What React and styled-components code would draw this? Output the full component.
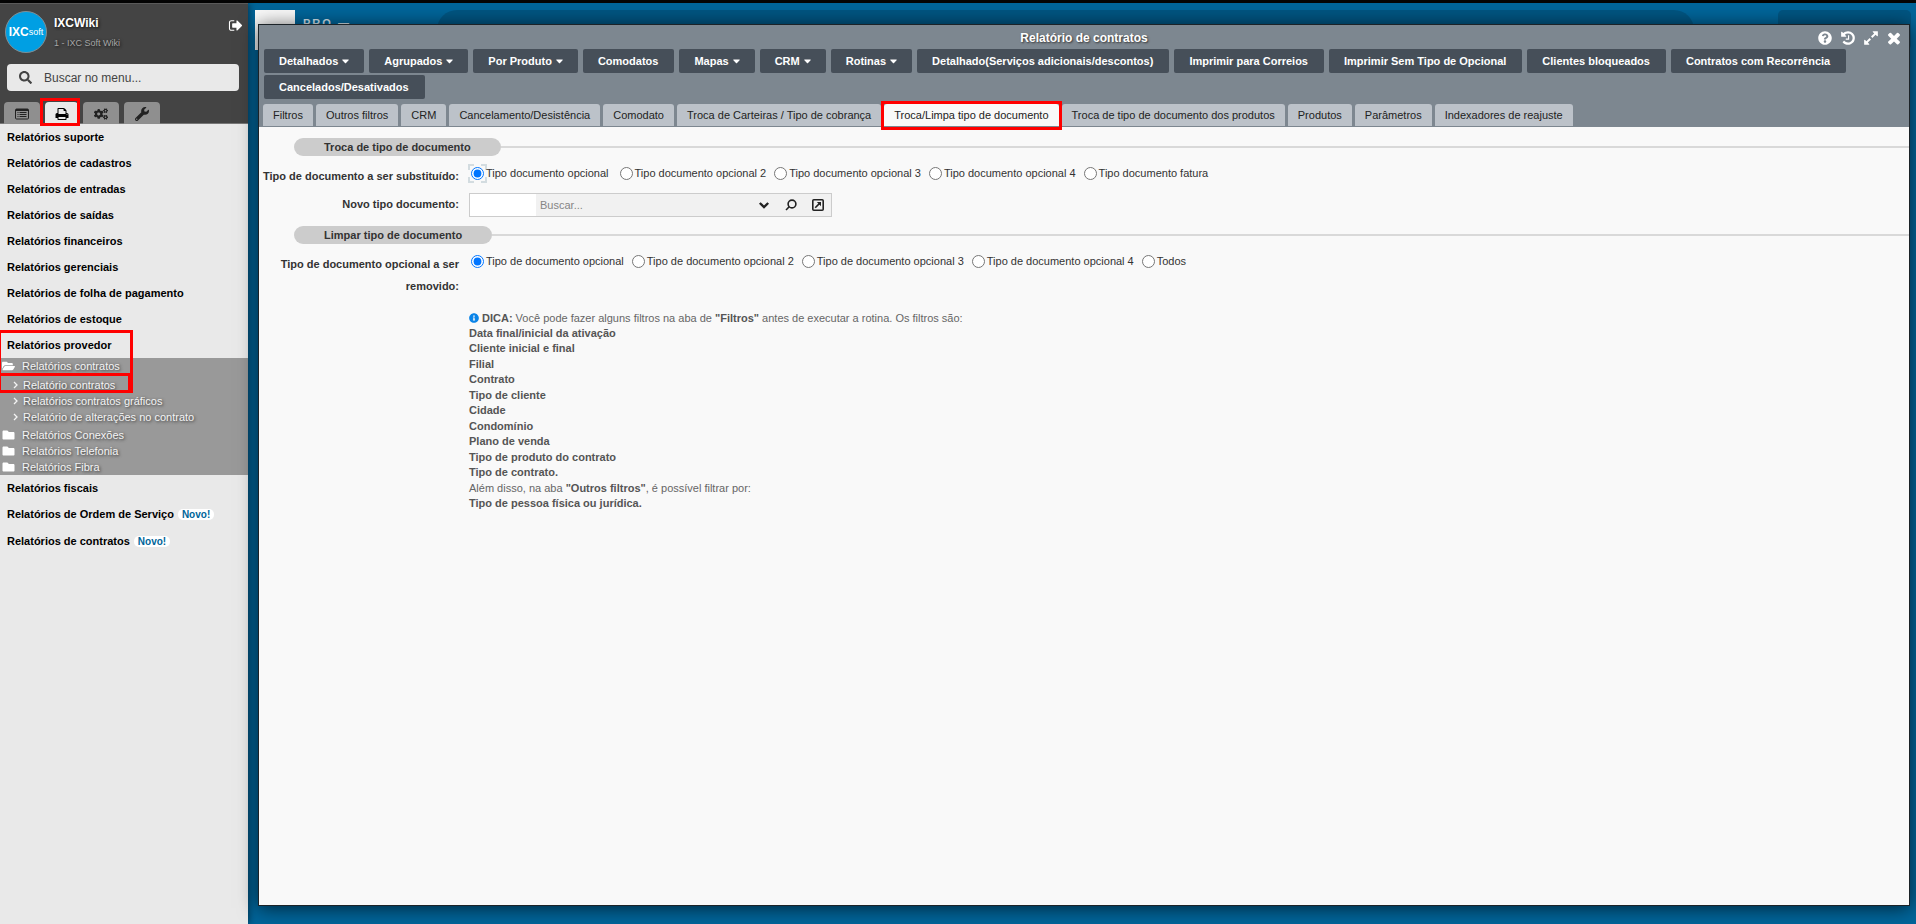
/* eslint-disable react/prop-types */
import { useState } from 'react';
import styled, { createGlobalStyle } from 'styled-components';
import {
    FaCaretDown, FaCogs, FaFolder, FaFolderOpen,
    FaInfoCircle, FaQuestionCircle, FaSearch, FaWrench
} from 'react-icons/fa';

const paths = {
    print: 'M384 1536h896v-256h-896v256zM384 896h896v-384h-160q-40 0-68-28t-28-68v-160h-640v640zM1536 960q0-26-19-45t-45-19-45 19-19 45 19 45 45 19 45-19 19-45zM1664 960v416q0 13-9.5 22.5t-22.5 9.5h-224v160q0 40-28 68t-68 28h-960q-40 0-68-28t-28-68v-160h-224q-13 0-22.5-9.5t-9.5-22.5v-416q0-79 56.5-135.5t135.5-56.5h64v-544q0-40 28-68t68-28h672q40 0 88 20t76 48l152 152q28 28 48 76t20 88v256h64q79 0 135.5 56.5t56.5 135.5z',
    signOut: 'M640 1440q0 4 1 20t.5 26.5-3 23.5-10 19.5-20.5 6.5h-320q-119 0-203.5-84.5t-84.5-203.5v-704q0-119 84.5-203.5t203.5-84.5h320q13 0 22.5 9.5t9.5 22.5q0 4 1 20t.5 26.5-3 23.5-10 19.5-20.5 6.5h-320q-66 0-113 47t-47 113v704q0 66 47 113t113 47h312l11.5 1 11.5 3 8 5.5 7 9 2 13.5zM1568 896q0 26-19 45l-544 544q-19 19-45 19t-45-19-19-45v-288h-448q-26 0-45-19t-19-45v-384q0-26 19-45t45-19h448v-288q0-26 19-45t45-19 45 19l544 544q19 19 19 45z',
    close: 'M1490 1322q0 40-28 68l-136 136q-28 28-68 28t-68-28l-294-294-294 294q-28 28-68 28t-68-28l-136-136q-28-28-28-68t28-68l294-294-294-294q-28-28-28-68t28-68l136-136q28-28 68-28t68 28l294 294 294-294q28-28 68-28t68 28l136 136q28 28 28 68t-28 68l-294 294 294 294q28 28 28 68z',
    history: 'M1664 896q0 156-61 298t-164 245-245 164-298 61q-172 0-327-72.5t-264-204.5q-7-10-6.5-22.5t8.5-20.5l137-138q10-9 25-9 16 2 23 12 73 95 179 147t225 52q104 0 198.5-40.5t163.5-109.5 109.5-163.5 40.5-198.5-40.5-198.5-109.5-163.5-163.5-109.5-198.5-40.5q-98 0-188 35.5t-160 101.5l137 138q31 30 14 69-17 40-59 40h-448q-26 0-45-19t-19-45v-448q0-42 40-59 39-17 69 14l130 129q107-101 244.5-156.5t284.5-55.5q156 0 298 61t245 164 164 245 61 298zM1024 608v448q0 14-9 23t-23 9h-320q-14 0-23-9t-9-23v-64q0-14 9-23t23-9h224v-352q0-14 9-23t23-9h64q14 0 23 9t9 23z',
    expand: 'M883 1056q0 13-10 23l-332 332 144 144q19 19 19 45t-19 45-45 19h-448q-26 0-45-19t-19-45v-448q0-26 19-45t45-19 45 19l144 144 332-332q10-10 23-10t23 10l114 114q10 10 10 23zM1664 192v448q0 26-19 45t-45 19-45-19l-144-144-332 332q-10 10-23 10t-23-10l-114-114q-10-10-10-23t10-23l332-332-144-144q-19-19-19-45t19-45 45-19h448q26 0 45 19t19 45z'
};

function Glyph({ name, size, width = 1792 }) {
    return (
        <svg width={size} height={size} viewBox={`0 0 ${width} 1792`} fill="currentColor" aria-hidden="true">
            <path d={paths[name]} />
        </svg>
    );
}

function ListIcon() {
    return (
        <svg viewBox="0 0 14 12" fill="none" stroke="currentColor" aria-hidden="true">
            <rect x="0.5" y="1" width="13" height="10" rx="1" />
            <path d="M1 2h12" strokeWidth="2" />
            <path d="M2.5 4.5h1M4.5 4.5h7M2.5 6.5h1M4.5 6.5h7M2.5 8.5h1M4.5 8.5h7" />
        </svg>
    );
}

function Chevron() {
    return (
        <svg viewBox="0 0 10 12" fill="none" stroke="currentColor" strokeWidth="1.3" aria-hidden="true">
            <path d="M3 3l3 3-3 3" />
        </svg>
    );
}

const actions = [
    { name: 'Detalhados', menu: true },
    { name: 'Agrupados', menu: true },
    { name: 'Por Produto', menu: true },
    { name: 'Comodatos' },
    { name: 'Mapas', menu: true },
    { name: 'CRM', menu: true },
    { name: 'Rotinas', menu: true },
    { name: 'Detalhado(Serviços adicionais/descontos)' },
    { name: 'Imprimir para Correios' },
    { name: 'Imprimir Sem Tipo de Opcional' },
    { name: 'Clientes bloqueados' },
    { name: 'Contratos com Recorrência' },
    { name: 'Cancelados/Desativados' }
];

const tabs = [
    'Filtros', 'Outros filtros', 'CRM', 'Cancelamento/Desistência', 'Comodato',
    'Troca de Carteiras / Tipo de cobrança', 'Troca/Limpa tipo de documento',
    'Troca de tipo de documento dos produtos', 'Produtos', 'Parâmetros', 'Indexadores de reajuste'
];

const reportsBefore = [
    'Relatórios suporte', 'Relatórios de cadastros', 'Relatórios de entradas', 'Relatórios de saídas',
    'Relatórios financeiros', 'Relatórios gerenciais', 'Relatórios de folha de pagamento', 'Relatórios de estoque'
];

const replaceOptions = [
    'Tipo documento opcional', 'Tipo documento opcional 2', 'Tipo documento opcional 3',
    'Tipo documento opcional 4', 'Tipo documento fatura'
];

const removeOptions = [
    'Tipo de documento opcional', 'Tipo de documento opcional 2', 'Tipo de documento opcional 3',
    'Tipo de documento opcional 4', 'Todos'
];

const filters = [
    'Data final/inicial da ativação', 'Cliente inicial e final', 'Filial', 'Contrato', 'Tipo de cliente',
    'Cidade', 'Condomínio', 'Plano de venda', 'Tipo de produto do contrato', 'Tipo de contrato.'
];

function Sidebar() {
    return (
        <Aside>
            <SideHeader>
                <User>
                    <Logo><b>IXC</b>soft</Logo>
                    <UserText>
                        <strong>IXCWiki</strong>
                        <span>1 - IXC Soft Wiki</span>
                    </UserText>
                    <IconButton aria-label="Sair"><Glyph name="signOut" size={15} width={1568} /></IconButton>
                </User>
                <Search>
                    <FaSearch />
                    <input type="text" placeholder="Buscar no menu..." aria-label="Buscar no menu" />
                </Search>
                <SideTabs>
                    <SideTab aria-label="Cadastros"><ListIcon /></SideTab>
                    <SideTab aria-label="Relatórios" $active><Glyph name="print" size={14} width={1664} /><TabMark /></SideTab>
                    <SideTab aria-label="Configurações"><FaCogs /></SideTab>
                    <SideTab aria-label="Ferramentas"><FaWrench /></SideTab>
                </SideTabs>
            </SideHeader>
            <nav>
                <Menu>
                    {reportsBefore.map(name => <li key={name}><MenuLink href="#">{name}</MenuLink></li>)}
                    <OpenItem>
                        <MenuLink href="#">Relatórios provedor</MenuLink>
                        <GroupMark />
                        <Submenu>
                            <li>
                                <FolderLink href="#"><FaFolderOpen />Relatórios contratos</FolderLink>
                                <Leaves>
                                    <li><LeafLink href="#"><Chevron />Relatório contratos</LeafLink><LeafMark /></li>
                                    <li><LeafLink href="#"><Chevron />Relatórios contratos gráficos</LeafLink></li>
                                    <li><LeafLink href="#"><Chevron />Relatório de alterações no contrato</LeafLink></li>
                                </Leaves>
                            </li>
                            <li><FolderLink href="#"><FaFolder />Relatórios Conexões</FolderLink></li>
                            <li><FolderLink href="#"><FaFolder />Relatórios Telefonia</FolderLink></li>
                            <li><FolderLink href="#"><FaFolder />Relatórios Fibra</FolderLink></li>
                        </Submenu>
                    </OpenItem>
                    <li><MenuLink href="#">Relatórios fiscais</MenuLink></li>
                    <li><MenuLink href="#">Relatórios de Ordem de Serviço<New>Novo!</New></MenuLink></li>
                    <li><MenuLink href="#" $tall>Relatórios de contratos<New>Novo!</New></MenuLink></li>
                </Menu>
            </nav>
        </Aside>
    );
}

function RadioGroup({ name, options, labelId, ring }) {
    const [selected, setSelected] = useState(options[0]);

    return (
        <Radios role="radiogroup" aria-labelledby={labelId}>
            {options.map((option, i) => (
                <Radio key={option} $ring={ring && i === 0}>
                    <input type="radio" name={name} checked={selected === option} onChange={() => setSelected(option)} />
                    {option}
                </Radio>
            ))}
        </Radios>
    );
}

function Report() {
    const [tab, setTab] = useState('Troca/Limpa tipo de documento');

    return (
        <Window>
            <WindowHeader>
                <TitleBar>
                    <h1>Relatório de contratos</h1>
                    <Controls>
                        <IconButton aria-label="Ajuda"><FaQuestionCircle size={14} /></IconButton>
                        <IconButton aria-label="Histórico"><Glyph name="history" size={16} /></IconButton>
                        <IconButton aria-label="Expandir"><Glyph name="expand" size={16} /></IconButton>
                        <IconButton aria-label="Fechar"><Glyph name="close" size={18} /></IconButton>
                    </Controls>
                </TitleBar>
                <Toolbar>
                    {actions.map(({ name, menu }) => (
                        <Action key={name} $menu={menu}>{name}{menu && <FaCaretDown />}</Action>
                    ))}
                </Toolbar>
                <Tabs role="tablist">
                    {tabs.map(name => (
                        <Tab key={name} role="tab" aria-selected={name === tab} $active={name === tab} onClick={() => setTab(name)}>
                            {name}
                        </Tab>
                    ))}
                </Tabs>
            </WindowHeader>

            <Content>
                <Divider><h2>Troca de tipo de documento</h2></Divider>
                <Fields>
                    <FieldLabel as="span" id="substituido">Tipo de documento a ser substituído:</FieldLabel>
                    <RadioGroup name="substituido" labelId="substituido" options={replaceOptions} ring />
                    <FieldLabel htmlFor="novo">Novo tipo documento:</FieldLabel>
                    <Lookup>
                        <input id="novo" type="text" />
                        <input type="text" placeholder="Buscar..." aria-label="Buscar tipo de documento" />
                        <button aria-label="Abrir lista">
                            <LineIcon width="12" height="12" viewBox="0 0 12 12"><path d="M1.8 4 6 8l4.2-4" strokeWidth="2.4" /></LineIcon>
                        </button>
                        <button aria-label="Pesquisar">
                            <LineIcon width="12" height="12" viewBox="0 0 12 12"><circle cx="7" cy="5" r="3.9" /><path d="M4.2 7.8 1 11" /></LineIcon>
                        </button>
                        <button aria-label="Abrir cadastro">
                            <LineIcon width="12" height="12" viewBox="0 0 12 12">
                                <rect x="0.8" y="0.8" width="10.4" height="10.4" rx="1" />
                                <path d="M3.2 8.8 7.6 4.4" />
                                <path d="M4.8 3h4.2v4.2z" fill="#222222" stroke="none" />
                            </LineIcon>
                        </button>
                    </Lookup>
                </Fields>

                <Divider><h2>Limpar tipo de documento</h2></Divider>
                <Fields>
                    <FieldLabel as="span" id="removido">Tipo de documento opcional a ser removido:</FieldLabel>
                    <RadioGroup name="removido" labelId="removido" options={removeOptions} />
                </Fields>

                <Tip>
                    <p>
                        <FaInfoCircle /><strong>DICA:</strong> Você pode fazer alguns filtros na aba de <strong>&quot;Filtros&quot;</strong> antes de executar a rotina. Os filtros são:
                    </p>
                    <ul>
                        {filters.map(name => <li key={name}>{name}</li>)}
                    </ul>
                    <p>Além disso, na aba <strong>&quot;Outros filtros&quot;</strong>, é possível filtrar por:</p>
                    <ul>
                        <li>Tipo de pessoa física ou jurídica.</li>
                    </ul>
                </Tip>
            </Content>
        </Window>
    );
}

export default function App() {
    return (
        <Page>
            <GlobalStyle />
            <Sidebar />
            <Desktop>
                <Backdrop>
                    <Tile />
                    <Brand>PRO —</Brand>
                    <Bar />
                    <SidePanel />
                </Backdrop>
                <Report />
            </Desktop>
        </Page>
    );
}

const GlobalStyle = createGlobalStyle`
    * {
        box-sizing: border-box;
    }
    body {
        margin: 0;
        font-family: "Liberation Sans", Arial, sans-serif;
        font-size: 11px;
    }
    h1, h2, p, ul {
        margin: 0;
        padding: 0;
        font-size: 11px;
    }
    ul {
        list-style: none;
    }
    a {
        color: inherit;
        text-decoration: none;
    }
    button, input {
        font-family: inherit;
        font-size: 11px;
    }
`;

const Page = styled.div`
    display: flex;
    min-height: 100vh;
    background-color: #00659a;
    border-top: 3px solid #050505;
`;

const Aside = styled.aside`
    flex: 0 0 248px;
    background-color: #e9e9e9;
    box-shadow: 0 0 8px rgba(0, 0, 0, 0.6);
`;

const SideHeader = styled.header`
    height: 121px;
    padding-top: 7px;
    background-color: #444444;
    border-top: 1px solid #5a5a5a;
    border-bottom: 1px solid #777777;
`;

const User = styled.div`
    display: flex;
    align-items: flex-start;
    gap: 7px;
    height: 53px;
    padding: 0 5px;
`;

const Logo = styled.div`
    display: flex;
    align-items: center;
    justify-content: center;
    width: 42px;
    height: 42px;
    border: 1px solid #7f8f96;
    border-radius: 50%;
    background-color: #009fe3;
    color: #ffffff;
    font-size: 9px;
    line-height: 12px;
    b{
        font-size: 12px;
    }
`;

const UserText = styled.div`
    display: flex;
    flex: 1;
    flex-direction: column;
    gap: 8px;
    padding-top: 5px;
    text-shadow: 1px 1px 3px #111111;
    strong{
        color: #ffffff;
        font-size: 12px;
        line-height: 14px;
    }
    span{
        color: #a6a6a6;
        font-size: 9px;
        line-height: 10px;
    }
`;

const IconButton = styled.button`
    display: flex;
    align-items: center;
    justify-content: center;
    width: 16px;
    height: 28px;
    padding: 0;
    border: 0;
    background: none;
    color: #ffffff;
    cursor: pointer;
    svg{
        flex-shrink: 0;
    }
`;

const Search = styled.label`
    display: flex;
    align-items: center;
    gap: 12px;
    height: 27px;
    margin: 0 9px 0 7px;
    padding-left: 12px;
    border-radius: 4px;
    background-color: #e9e9e9;
    color: #444444;
    svg{
        width: 13px;
        height: 13px;
    }
    input{
        flex: 1;
        min-width: 0;
        padding: 0;
        border: 0;
        outline: 0;
        background: none;
        font-size: 12px;
    }
    input::placeholder{
        color: #444444;
    }
`;

const SideTabs = styled.div`
    display: flex;
    gap: 5px;
    padding: 11px 4px 0;
`;

const SideTab = styled.button`
    position: relative;
    display: flex;
    align-items: center;
    justify-content: center;
    width: ${props => props.$active ? '33px' : '36px'};
    height: 22px;
    padding: 2px 0 0;
    border: 0;
    border-radius: 4px 4px 0 0;
    background-color: ${props => props.$active ? '#e9e9e9' : '#8f8f8f'};
    color: ${props => props.$active ? '#000000' : '#222222'};
    cursor: pointer;
    svg{
        width: 14px;
        height: 14px;
    }
`;

const Mark = styled.span`
    position: absolute;
    border: 3px solid #ff0000;
    pointer-events: none;
`;

const TabMark = styled(Mark)`
    inset: -4px -2px -2px -5px;
    z-index: 1;
`;

const Menu = styled.ul`
    color: #000000;
`;

const MenuLink = styled.a`
    display: flex;
    align-items: center;
    gap: 4px;
    height: ${props => props.$tall ? '28px' : '26px'};
    padding-left: 7px;
    font-weight: 700;
`;

const New = styled.span`
    padding: 0 4px;
    border-radius: 5px;
    background-color: #ffffff;
    color: #00659a;
    font-size: 10px;
    line-height: 11px;
`;

const OpenItem = styled.li`
    position: relative;
`;

const GroupMark = styled(Mark)`
    top: -2px;
    left: -2px;
    width: 135px;
    height: 63px;
`;

const Submenu = styled.ul`
    background-color: #999999;
    color: #f4f4f4;
    text-shadow: 1px 1px 3px #333333;
`;

const FolderLink = styled.a`
    display: flex;
    align-items: center;
    gap: 7px;
    height: 16px;
    padding-left: 2px;
    svg{
        width: 13px;
        height: 12px;
        color: #ffffff;
    }
`;

const Leaves = styled.ul`
    padding: 3px 0 2px;
    li{
        position: relative;
    }
`;

const LeafLink = styled.a`
    display: flex;
    align-items: center;
    gap: 2px;
    height: 16px;
    padding-left: 11px;
    svg{
        width: 10px;
        height: 12px;
    }
`;

const LeafMark = styled(Mark)`
    top: -4px;
    left: -2px;
    width: 133px;
    height: 20px;
`;

const Desktop = styled.main`
    position: relative;
    flex: 1;
    min-width: 0;
`;

const Backdrop = styled.div`
    display: flex;
    align-items: flex-start;
    padding: 7px 5px 0 7px;
`;

const Tile = styled.div`
    width: 40px;
    height: 40px;
    background-color: #f9f9f9;
`;

const Brand = styled.span`
    flex: 0 0 142px;
    padding: 7px 0 0 8px;
    color: #d4e4ed;
    font-weight: 700;
    letter-spacing: 2px;
    line-height: 12px;
`;

const Bar = styled.div`
    flex: 1;
    height: 40px;
    margin-right: 84px;
    border-radius: 20px;
    background-color: #005582;
`;

const SidePanel = styled.div`
    width: 133px;
    height: 40px;
    border-radius: 5px;
    background-color: #005582;
`;

const Window = styled.section`
    position: absolute;
    inset: 21px 6px 18px 10px;
    display: flex;
    flex-direction: column;
    border: 1px solid #1c2328;
    background-color: #f9f9f9;
    box-shadow: 0 2px 18px rgba(0, 0, 0, 0.65);
`;

const WindowHeader = styled.header`
    border-bottom: 1px solid #7d8790;
    background-color: #7d8790;
`;

const TitleBar = styled.div`
    display: flex;
    align-items: center;
    justify-content: center;
    position: relative;
    height: 24px;
    padding-top: 2px;
    h1{
        color: #ffffff;
        font-size: 12px;
        text-shadow: 1px 1px 2px #333333;
    }
`;

const Controls = styled.div`
    position: absolute;
    top: -1px;
    right: 7px;
    display: flex;
    gap: 7px;
`;

const Toolbar = styled.div`
    display: flex;
    flex-wrap: wrap;
    gap: 2px 5px;
    padding: 0 5px;
`;

const Action = styled.button`
    display: flex;
    align-items: center;
    gap: 4px;
    height: 24px;
    padding: ${props => props.$menu ? '0 15px' : '0 16px 0 15px'};
    border: 0;
    border-radius: 2px;
    background-color: #464f59;
    color: #ffffff;
    font-weight: 700;
    cursor: pointer;
    svg{
        width: 7px;
        height: 12px;
    }
`;

const Tabs = styled.div`
    display: flex;
    gap: 3px;
    padding: 5px 4px 0;
`;

const Tab = styled.button`
    position: relative;
    height: 22px;
    padding: 0 10px;
    border: 0;
    border-radius: 3px 3px 0 0;
    background-color: ${props => props.$active ? '#f9f9f9' : '#bcc2c9'};
    color: #222222;
    cursor: pointer;
    &::after{
        content: '';
        display: ${props => props.$active ? 'block' : 'none'};
        position: absolute;
        inset: -3px -3px -4px;
        border: 3px solid #ff0000;
    }
`;

const Content = styled.div`
    padding-top: 11px;
    color: #333333;
`;

const Divider = styled.div`
    display: flex;
    align-items: center;
    padding-left: 35px;
    h2{
        padding: 0 30px;
        border-radius: 9px;
        background-color: #cccccc;
        line-height: 18px;
    }
    &::after{
        content: '';
        flex: 1;
        height: 2px;
        background-color: #d9d9d9;
    }
`;

const Fields = styled.div`
    display: grid;
    grid-template-columns: 200px 1fr;
    gap: 6px 10px;
    padding: 9px 0;
`;

const FieldLabel = styled.label`
    font-weight: 700;
    line-height: 22px;
    text-align: right;
`;

const Radios = styled.div`
    display: flex;
    flex-wrap: wrap;
    gap: 8px;
    height: 16px;
    padding-left: 2px;
`;

const Radio = styled.label`
    display: flex;
    align-items: center;
    gap: 2px;
    margin-right: ${props => props.$ring ? '3px' : '0'};
    input{
        width: 13px;
        height: 13px;
        margin: 0;
        outline: ${props => props.$ring ? '2px dashed #d3dce0' : '0'};
        outline-offset: 1px;
    }
`;

const Lookup = styled.div`
    display: flex;
    width: 363px;
    height: 24px;
    border: 1px solid #cccccc;
    background-color: #f1f1f1;
    input{
        flex: 1;
        min-width: 0;
        padding: 0 4px;
        border: 0;
        outline: 0;
        background: none;
    }
    input:first-child{
        flex: 0 0 66px;
        background-color: #ffffff;
    }
    input::placeholder{
        color: #858585;
    }
    button{
        display: flex;
        align-items: center;
        justify-content: center;
        width: 27px;
        padding: 0;
        border: 0;
        background: none;
        cursor: pointer;
    }
`;

const LineIcon = styled.svg`
    fill: none;
    stroke: #222222;
    stroke-width: 1.6;
`;

const Tip = styled.div`
    margin: 5px 0 0 210px;
    color: #555555;
    line-height: 15px;
    p{
        color: #666666;
    }
    strong, li{
        color: #555555;
        font-weight: 700;
    }
    li:nth-child(even){
        margin-bottom: 1px;
    }
    svg{
        width: 10px;
        height: 10px;
        margin-right: 3px;
        color: #0a84e8;
        vertical-align: -1px;
    }
`;
